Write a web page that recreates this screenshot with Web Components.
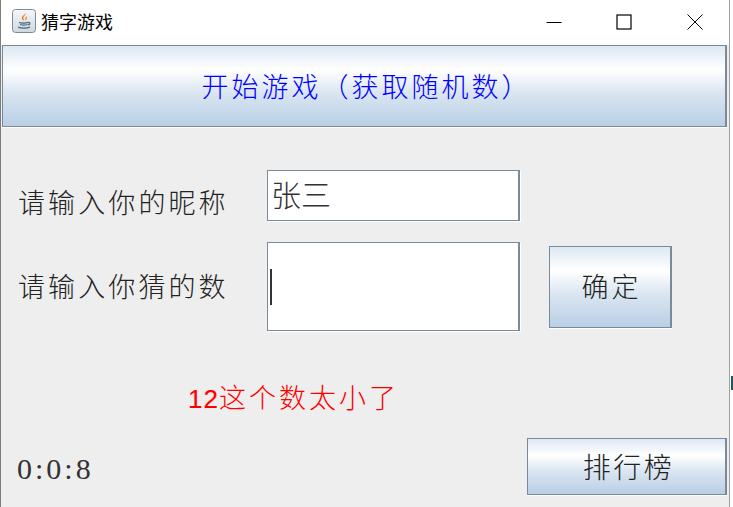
<!DOCTYPE html>
<html lang="zh">
<head>
<meta charset="utf-8">
<title>猜字游戏</title>
<style>
  html, body { margin: 0; padding: 0; background: #fff; }
  body { width: 733px; height: 507px; overflow: hidden; font-family: "Noto Sans CJK SC", "Liberation Sans", sans-serif; }
</style>
</head>
<body>
<game-window>
  <title-bar slot="title">猜字游戏</title-bar>
  <metal-button slot="start" color="#0000ff" size="27" spacing="3" shift="5">开始游戏（获取随机数）</metal-button>
  <game-label slot="name-label">请输入你的昵称</game-label>
  <text-box slot="name-box" value="张三"></text-box>
  <game-label slot="guess-label">请输入你猜的数</game-label>
  <text-box slot="guess-box" caret></text-box>
  <metal-button slot="ok" size="27" spacing="3" shift="3">确定</metal-button>
  <game-message slot="message"><b>12</b>这个数太小了</game-message>
  <game-timer slot="timer">0:0:8</game-timer>
  <metal-button slot="rank" size="28" spacing="2.500" shift="4">排行榜</metal-button>
</game-window>

<script>
class GameWindow extends HTMLElement {
  constructor() {
    super();
    this.attachShadow({ mode: 'open' });
    this.shadowRoot.innerHTML = `
      <style>
        :host { display: block; width: 733px; height: 507px; box-sizing: border-box; background: #fff; position: relative; }
        .frame {
          width: 730px; height: 507px; box-sizing: border-box;
          border-left: 1px solid #7d7d7d; border-right: 1px solid #a0a0a0;
          display: flex; flex-direction: column;
        }
        .content { flex: 1; background: #eeeeee; display: flex; flex-direction: column; padding: 0 2px 0 1px; }
        .start { height: 82px; display: flex; }
        .start ::slotted(*) { flex: 1; }
        .form {
          display: grid;
          grid-template-columns: 249px 253px 122px;
          padding: 43px 0 0 16px;
          align-items: center;
        }
        .name-box { grid-column: 2; }
        .guess-box { grid-column: 2; margin-top: 21px; height: 89px; display: flex; }
        .guess-label { margin-top: 19px; }
        .name-label { margin-top: 12px; }
        .ok { margin: 21px 0 0 29px; display: flex; height: 82px; width: 123px; }
        .ok ::slotted(*) { flex: 1; }
        .message { padding: 52px 0 0 186px; height: 27px; }
        .bottom { display: flex; justify-content: space-between; align-items: center; padding: 28px 0 0 15px; height: 57px; }
        .rank { display: flex; width: 200px; height: 57px; }
        .rank ::slotted(*) { flex: 1; }
        .bottom ::slotted(game-timer) { margin-top: 5px; }
        .mark { position: absolute; left: 731px; top: 376px; width: 2px; height: 14px; background: #1d5a5e; }
      </style>
      <div class="frame">
        <slot name="title"></slot>
        <div class="content">
          <div class="start"><slot name="start"></slot></div>
          <div class="form">
            <div class="name-label"><slot name="name-label"></slot></div>
            <div class="name-box"><slot name="name-box"></slot></div>
            <div></div>
            <div class="guess-label"><slot name="guess-label"></slot></div>
            <div class="guess-box"><slot name="guess-box"></slot></div>
            <div class="ok"><slot name="ok"></slot></div>
          </div>
          <div class="message"><slot name="message"></slot></div>
          <div class="bottom">
            <slot name="timer"></slot>
            <div class="rank"><slot name="rank"></slot></div>
          </div>
        </div>
      </div>
      <div class="mark"></div>
    `;
  }
}

class TitleBar extends HTMLElement {
  constructor() {
    super();
    this.attachShadow({ mode: 'open' });
    this.shadowRoot.innerHTML = `
      <style>
        :host { display: flex; align-items: center; height: 45px; box-sizing: border-box; padding-left: 11px; background: #fff; color: #000; font: 18px/1 "Noto Sans CJK SC", sans-serif; }
        .icon { width: 24px; height: 24px; flex: none; margin-right: 5px; margin-top: -4px; }
        .title { flex: 1; margin-top: -3px; }
        .controls { display: flex; width: 183px; align-items: center; }
        .controls svg { display: block; width: 16px; height: 16px; margin-top: -2px; }
        .controls svg:nth-child(2) { margin-left: 54px; }
        .controls svg:nth-child(3) { margin-left: 55px; }
      </style>
      <svg class="icon" viewBox="0 0 24 24">
        <defs><linearGradient id="tile" x1="0" y1="0" x2="0" y2="1">
          <stop offset="0" stop-color="#f6f8fa"/><stop offset="1" stop-color="#cfd7df"/>
        </linearGradient></defs>
        <rect x=".5" y=".5" width="23" height="23" rx="3" fill="url(#tile)" stroke="#7b8a99"/>
        <path d="M13.500 4c1 2-3 3-2 6 .3 1 1 1.400 1 2-1-.4-3-1.500-2.600-3.500C10.300 6.500 13 6 13.500 4z" fill="#e9711c"/>
        <path d="M15 7c-1 1-2 1.500-1.800 3 .1.700.4 1 .3 1.600.9-.6 1.700-1.300 1.300-2.600-.2-.7 0-1.300.2-2z" fill="#f0913a"/>
        <path d="M7 13.500c2 .7 7 .7 9 0M8 15.500c2 .6 5.500.6 7.500 0M6 18c3 1.500 9 1.500 12 0M16 13.600c2-.7 3 1.300 .2 2.500" fill="none" stroke="#47637c" stroke-width="1.200"/>
      </svg>
      <span class="title"><slot></slot></span>
      <div class="controls">
        <svg viewBox="0 0 16 16"><path d="M.5 8.500h15" stroke="#000" stroke-width="1" fill="none"/></svg>
        <svg viewBox="0 0 16 16"><rect x="1" y="1" width="14" height="14" stroke="#000" stroke-width="1.200" fill="none"/></svg>
        <svg viewBox="0 0 16 16"><path d="M.5 .5l15 15M15.500 .5l-15 15" stroke="#000" stroke-width="1" fill="none"/></svg>
      </div>
    `;
  }
}

class MetalButton extends HTMLElement {
  static get observedAttributes() {
    return ['color', 'size', 'spacing', 'shift'];
  }

  constructor() {
    super();
    this.attachShadow({ mode: 'open' });
  }

  connectedCallback() {
    this.render();
  }

  attributeChangedCallback() {
    this.render();
  }

  render() {
    const color = this.getAttribute('color') || '#222222';
    const size = this.getAttribute('size') || '26';
    const spacing = this.getAttribute('spacing') || '0';
    const shift = this.getAttribute('shift') || '0';
    this.shadowRoot.innerHTML = `
      <style>
        :host { display: flex; box-sizing: border-box; }
        .btn {
          flex: 1; display: flex; align-items: center; justify-content: center;
          box-sizing: border-box;
          padding: 0 0 2px ${shift}px;
          border: 1px solid #7a8a99; border-right-width: 2px;
          box-shadow: 0 1px 0 #fff;
          background: linear-gradient(#dde8f3 0%, #ffffff 30%, #dbe6f1 58%, #b8cfe5 100%);
          color: ${color};
          font: 300 ${size}px/1 "Noto Sans CJK SC", sans-serif;
          letter-spacing: ${spacing}px;
          white-space: nowrap;
        }
      </style>
      <div class="btn"><span><slot></slot></span></div>
    `;
  }
}

class GameLabel extends HTMLElement {
  constructor() {
    super();
    this.attachShadow({ mode: 'open' });
    this.shadowRoot.innerHTML = `
      <style>
        :host { display: block; color: #222; font: 300 27px/1 "Noto Sans CJK SC", sans-serif; letter-spacing: 3.100px; white-space: nowrap; }
      </style>
      <slot></slot>
    `;
  }
}

class TextBox extends HTMLElement {
  constructor() {
    super();
    this.attachShadow({ mode: 'open' });
  }

  connectedCallback() {
    const value = this.getAttribute('value') || '';
    const caret = this.hasAttribute('caret');
    this.shadowRoot.innerHTML = `
      <style>
        :host { display: flex; flex: 1; box-sizing: border-box; min-height: 51px; }
        .box {
          flex: 1; display: flex; align-items: center; box-sizing: border-box;
          background: #fff; padding-left: 3px;
          border: 1px solid #7a8a99; border-right-width: 2px;
          box-shadow: 1px 1px 0 #fff;
          color: #333; font: 300 30px/1 "Noto Sans CJK SC", sans-serif;
        }
        .text { margin-top: -5px; }
        .caret { display: block; width: 2px; height: 36px; background: #333; margin-left: -1px; }
      </style>
      <div class="box">${caret ? '<i class="caret"></i>' : `<span class="text">${value}</span>`}</div>
    `;
  }
}

class GameMessage extends HTMLElement {
  constructor() {
    super();
    this.attachShadow({ mode: 'open' });
    this.shadowRoot.innerHTML = `
      <style>
        :host { display: block; color: #ff0000; font: 300 27px/28px "Noto Sans CJK SC", sans-serif; letter-spacing: 3px; white-space: nowrap; }
        ::slotted(b) { font: 400 26px/28px "Liberation Sans", sans-serif; letter-spacing: 1px; -webkit-text-stroke: .15px #ff0000; }
      </style>
      <slot></slot>
    `;
  }
}

class GameTimer extends HTMLElement {
  constructor() {
    super();
    this.attachShadow({ mode: 'open' });
    this.shadowRoot.innerHTML = `
      <style>
        :host { display: block; color: #333; font: 30px/1 "Liberation Serif", serif; letter-spacing: 3px; white-space: nowrap; }
      </style>
      <slot></slot>
    `;
  }
}

customElements.define('game-window', GameWindow);
customElements.define('title-bar', TitleBar);
customElements.define('metal-button', MetalButton);
customElements.define('game-label', GameLabel);
customElements.define('text-box', TextBox);
customElements.define('game-message', GameMessage);
customElements.define('game-timer', GameTimer);
</script>
</body>
</html>
